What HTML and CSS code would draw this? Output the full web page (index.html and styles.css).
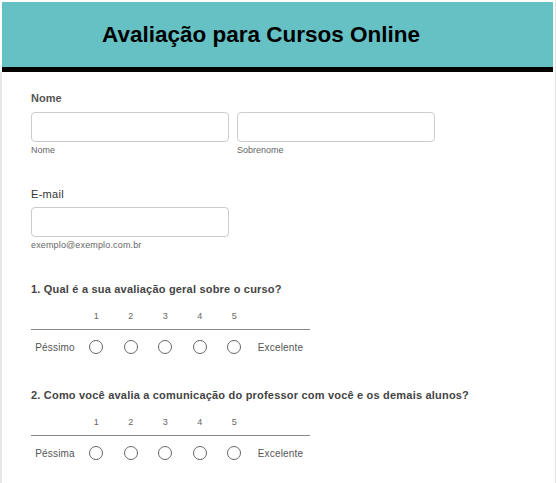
FILE: index.html
```html
<!DOCTYPE html>
<html lang="pt-BR">
<head>
<meta charset="utf-8">
<title>Avaliação para Cursos Online</title>
<link rel="stylesheet" href="styles.css">
</head>
<body>
<div class="page">
  <header class="header">
    <h1 class="title">Avaliação para Cursos Online</h1>
  </header>
  <main class="form">
    <section class="field field-name">
      <div class="label">Nome</div>
      <div class="name-row">
        <div class="sub">
          <div class="input"></div>
          <div class="hint">Nome</div>
        </div>
        <div class="sub">
          <div class="input"></div>
          <div class="hint">Sobrenome</div>
        </div>
      </div>
    </section>
    <section class="field field-email">
      <div class="label label-light">E-mail</div>
      <div class="input"></div>
      <div class="hint hint-wide">exemplo@exemplo.com.br</div>
    </section>
    <section class="field question">
      <div class="qlabel">1. Qual é a sua avaliação geral sobre o curso?</div>
      <div class="scale">
        <div class="cell head"></div>
        <div class="cell head num">1</div>
        <div class="cell head num">2</div>
        <div class="cell head num">3</div>
        <div class="cell head num">4</div>
        <div class="cell head num">5</div>
        <div class="cell head"></div>
        <div class="cell end">Péssimo</div>
        <div class="cell"><span class="radio"></span></div>
        <div class="cell"><span class="radio"></span></div>
        <div class="cell"><span class="radio"></span></div>
        <div class="cell"><span class="radio"></span></div>
        <div class="cell"><span class="radio"></span></div>
        <div class="cell end">Excelente</div>
      </div>
    </section>
    <section class="field question">
      <div class="qlabel">2. Como você avalia a comunicação do professor com você e os demais alunos?</div>
      <div class="scale">
        <div class="cell head"></div>
        <div class="cell head num">1</div>
        <div class="cell head num">2</div>
        <div class="cell head num">3</div>
        <div class="cell head num">4</div>
        <div class="cell head num">5</div>
        <div class="cell head"></div>
        <div class="cell end">Péssima</div>
        <div class="cell"><span class="radio"></span></div>
        <div class="cell"><span class="radio"></span></div>
        <div class="cell"><span class="radio"></span></div>
        <div class="cell"><span class="radio"></span></div>
        <div class="cell"><span class="radio"></span></div>
        <div class="cell end">Excelente</div>
      </div>
    </section>
  </main>
</div>
</body>
</html>
```
FILE: styles.css
```css
html, body {
  margin: 0;
  padding: 0;
  background: #ffffff;
}
body {
  font-family: "Liberation Sans", Arial, sans-serif;
  color: #555555;
}
.page {
  box-sizing: border-box;
  width: 556px;
  height: 483px;
  overflow: hidden;
  padding-top: 2px;
  border-right: 1px solid #e4e4e4;
  display: flex;
  flex-direction: column;
}
.header {
  flex: none;
  margin: 0 2px 0 2px;
  height: 65px;
  background: #65c1c4;
  border-bottom: 5px solid #000000;
  display: flex;
  align-items: center;
  justify-content: center;
  padding-right: 33px;
}
.title {
  margin: 0;
  font-size: 22.5px;
  font-weight: bold;
  color: #000000;
  padding-top: 1px;
}
.form {
  flex: 1;
  border-left: 2px solid #e8e8e8;
  padding: 20px 0 0 29px;
}
.label {
  font-size: 11px;
  font-weight: bold;
  color: #555555;
  line-height: 13px;
  height: 13px;
  margin-bottom: 7px;
}
.label-light {
  font-weight: normal;
  color: #333333;
  letter-spacing: 0.3px;
  margin-bottom: 6px;
}
.name-row {
  display: flex;
  gap: 8px;
}
.input {
  box-sizing: border-box;
  width: 198px;
  height: 30px;
  border: 1px solid #cccccc;
  border-radius: 4px;
  background: #ffffff;
}
.hint {
  font-size: 9px;
  color: #666666;
  line-height: 11px;
  margin-top: 3px;
}
.hint-wide {
  letter-spacing: 0.15px;
}
.field-name {
  margin-bottom: 32px;
}
.field-email {
  margin-bottom: 32px;
}
.qlabel {
  font-size: 11px;
  font-weight: bold;
  color: #444444;
  line-height: 13px;
  letter-spacing: 0.2px;
  margin-bottom: 13px;
}
.scale {
  display: grid;
  grid-template-columns: 48px repeat(5, 34.5px) 58px;
  width: 278.5px;
}
.cell {
  display: flex;
  align-items: center;
  justify-content: center;
  height: 34px;
  font-size: 10px;
  letter-spacing: 0.2px;
  color: #555555;
}
.cell.head {
  box-sizing: border-box;
  height: 21px;
  border-bottom: 1px solid #888888;
  align-items: flex-start;
  padding-top: 1px;
  line-height: 12px;
}
.cell.num {
  font-size: 9px;
  color: #666666;
}
.cell.end.first {
  padding-left: 1px;
}
.radio {
  display: block;
  box-sizing: border-box;
  width: 14px;
  height: 14px;
  border: 1px solid #666666;
  border-radius: 50%;
  background: #ffffff;
}
.question {
  margin-bottom: 25px;
}
```
